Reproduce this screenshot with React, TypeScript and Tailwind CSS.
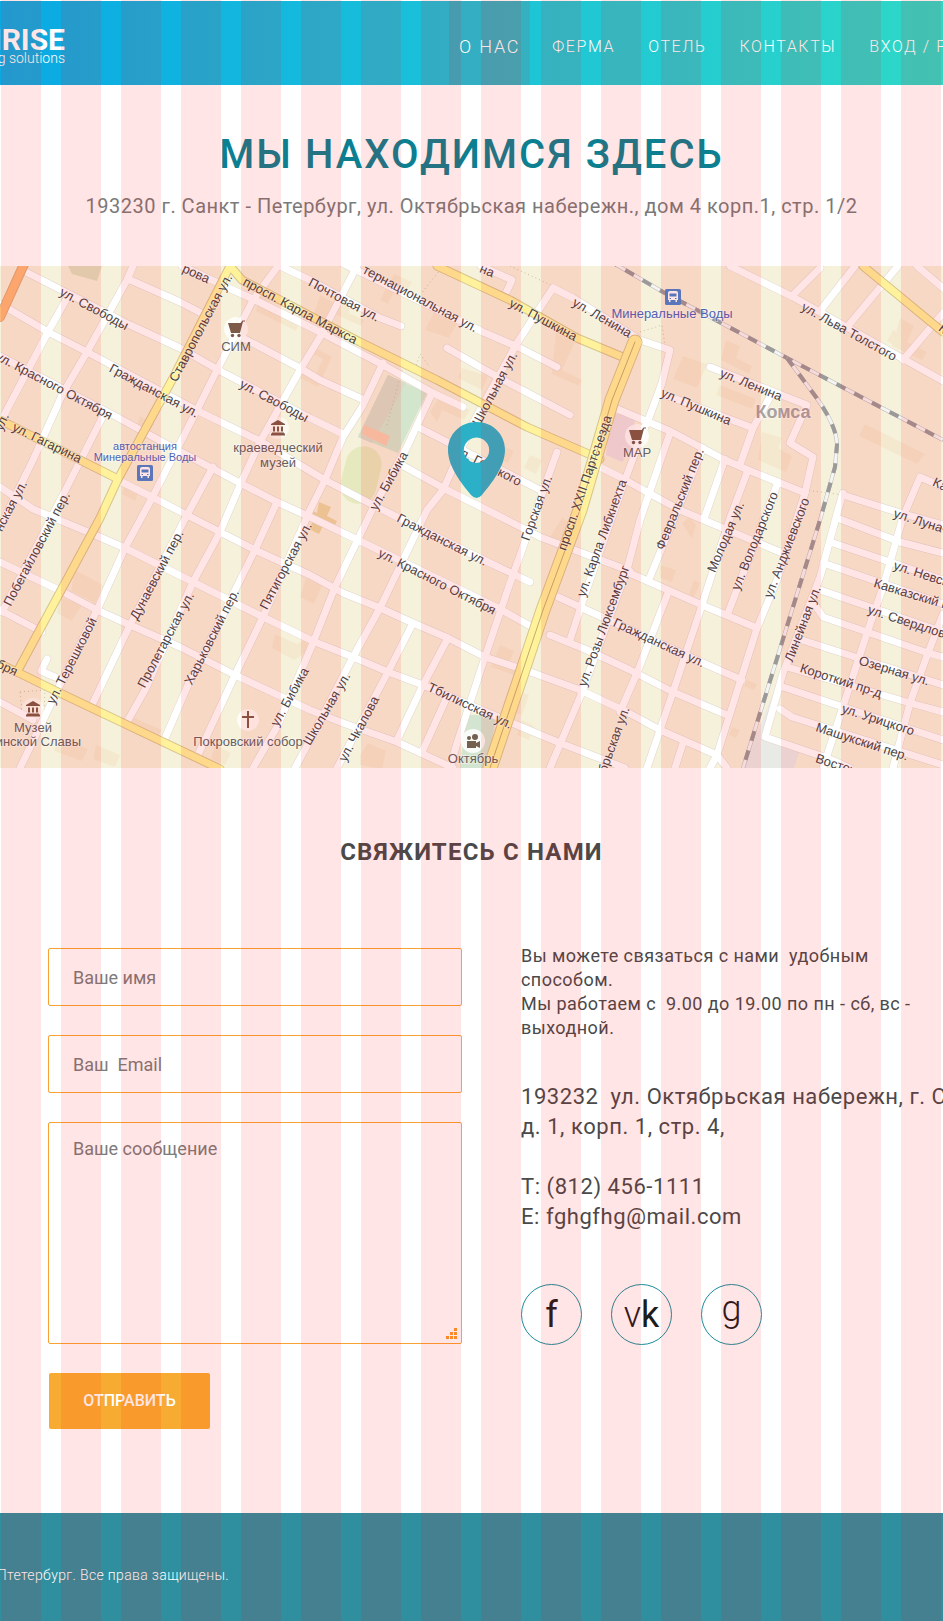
import React from "react";

const minorRoads: string[] = [
  "M24 271L130 325L180 348L222 372L310 418L343 434",
  "M0 304L50 333L87 352L200 412L260 441L325 480L373 505L397 517L490 563L530 582",
  "M0 356L115 416L168 445L240 483L277 502L310 517L360 541L500 609L532 627",
  "M122 482L152 497L187 515L220 532L255 550L310 575L343 593L380 608L413 623L448 638L485 657L525 670L580 690L627 712L660 730L717 755L727 768",
  "M0 487L33 509L95 535L125 548L193 582L263 617L315 642L353 657L388 672L423 685L512 723L560 743L625 768",
  "M0 562L63 592L97 610L130 625L180 647L235 675L310 710L343 723L397 742L453 768",
  "M0 610L42 632",
  "M0 702L33 720",
  "M55 677L41 671L47 659",
  "M340 262L483 332L518 347L557 367",
  "M280 266L310 280L380 318L401 326",
  "M182 266L233 290L255 300L320 332L383 365L433 393L463 407",
  "M128 279L180 302L207 316",
  "M243 338L300 368L320 380L362 399",
  "M447 348L480 367L507 382L570 415",
  "M481 266L512 280L506 293",
  "M553 288L573 298L640 340L670 350L662 383L647 423",
  "M133 266L127 280L87 352L63 393L33 460L0 527",
  "M67 298L48 332L3 417L0 426",
  "M102 418L67 487L40 540L2 612",
  "M278 266L253 300L217 370L197 410L152 498L125 548L97 610L60 685L20 768",
  "M357 266L320 337L300 370L260 442L240 485L220 532L193 582L145 690L127 722",
  "M213 467L187 515L160 567L130 625L92 705",
  "M277 502L255 550L188 685L163 743",
  "M383 363L362 407L343 437L325 480L310 510L263 617L235 675L197 757",
  "M432 393L407 447L372 510L335 587L313 643L277 727L253 768",
  "M553 288L517 343L473 423L443 490L427 510L380 608L353 657L310 740L295 768",
  "M420 428L540 490",
  "M398 463L447 490L493 513L540 537L630 571",
  "M413 623L388 672L337 768",
  "M448 638L423 685L397 740",
  "M447 697L423 750",
  "M557 452L523 547L510 583L485 657L457 743L450 768",
  "M646 424L625 480L583 600L570 640",
  "M670 433L640 520L627 570L580 697L550 768",
  "M703 448L650 577",
  "M725 459L704 519",
  "M748 470L730 518L702 605L673 692L647 768",
  "M778 482L728 613",
  "M710 367L807 405L790 443L813 457L805 493L777 580L757 628L717 755L710 768",
  "M668 593L637 673L620 712",
  "M683 743L675 768",
  "M610 406L670 431L723 459L748 470L805 493",
  "M600 467L620 477L647 492L680 510L780 552",
  "M627 572L702 605L757 628",
  "M558 597L580 607L703 663L742 680",
  "M550 635L587 650L630 670L673 692L727 715",
  "M660 393L753 428",
  "M772 393L753 428L741 462",
  "M730 266L793 297L900 357L943 381",
  "M820 268L793 295",
  "M855 266L820 311",
  "M898 266L848 326",
  "M943 313L903 360",
  "M917 266L943 288",
  "M843 493L838 510L820 577L783 673L765 737L827 758L850 768",
  "M943 487L920 477L903 517L883 587L867 633L823 768",
  "M843 495L897 512L943 525",
  "M837 518L900 542L943 553",
  "M833 543L890 562L943 580",
  "M823 563L943 604",
  "M820 590L943 632",
  "M813 602L823 617L867 632L928 653L943 657",
  "M802 640L855 657L943 685",
  "M787 667L910 703L943 712",
  "M783 687L837 705L943 740",
  "M780 709L792 717L943 765",
  "M943 614L928 653L910 703L893 768",
];

const yellowRoads: string[] = [
  "M0 420L118 479",
  "M230 266L172 380L118 479L100 518L17 672",
  "M0 664L17 672L60 693L220 769",
  "M230 266L242 280L360 342L437 380L527 427L600 459",
  "M437 266L510 300L577 338L625 358",
  "M863 266L943 332",
];

const buildings: string[] = [
  "M310 345l22 12l-14 30l-20 -10l3 -6l13 6l9 -18l-14 -7z",
  "M340 300l12 5l-4 8l16 7l-3 6l-24 -11z",
  "M380 300l14 -26l18 8l-5 8l-10 -4l-9 18z",
  "M425 330l10 -20l24 10l-10 18z",
  "M462 368l26 8l-6 14l-24 -12z",
  "M430 412l10 -16l30 14l-6 10l-22 -10l-5 12z",
  "M556 330l20 10l-14 30l20 10l-3 6l-27 -12z",
  "M500 445l14 6l-6 12l-14 -6z",
  "M530 455l12 5l-6 14l-12 -6z",
  "M262 285l12 6l-5 12l32 16l-5 12l-40 -20z",
  "M320 295l14 8l-8 18l-12 -8z",
  "M683 356l24 8l-10 24l-24 -9z",
  "M726 340l14 6l-4 12l16 8l-3 8l-28 -14z",
  "M720 385l36 14l-4 10l-36 -14z",
  "M762 432l20 6l-4 10l14 8l-6 16l-28 -12z",
  "M865 424l60 30l-8 10l-58 -28z",
  "M900 318l14 8l-7 16l20 10l-5 8l-30 -14z",
  "M893 330l10 4l-6 12l-10 -5z",
  "M75 570l28 15l-8 18l-24 -12z",
  "M60 597l22 8l-10 16l-15 -8z",
  "M275 634l22 10l12 -6l-3 14l-12 8l-22 -12z",
  "M306 578l16 8l-8 18l-14 -7z",
  "M60 737l28 12l-6 12l-28 -10z",
  "M96 745l24 10l-5 12l-22 -8z",
  "M128 715l34 15l-5 7l-34 -15z",
  "M215 745l16 8l-6 12l-14 -6z",
  "M140 416l14 8l-6 10l-12 -6z",
  "M124 486l14 7l-3 8l-13 -7z",
  "M500 645l14 6l-5 12l20 8l-4 8l-34 -12z",
  "M548 540l14 -22l8 4l-12 28z",
  "M515 690l14 5l-7 20l-12 -4z",
  "M522 720l12 6l-5 14l-12 -5z",
  "M660 565l16 5l-4 12l-12 -4z",
  "M682 523l8 -6l6 8l-4 14z",
  "M747 680l10 4l-3 6l-10 -4z",
  "M732 727l8 3l-4 8l-7 -3z",
  "M694 580l6 3l-6 14l-5 -3z",
  "M360 755l8 -12l18 8l-4 18l-22 -4z",
];

type Label = [text: string, x: number, y: number, angle: number];

const streetLabels: Label[] = [
  ["рова", 196, 274, 24],
  ["ул. Свободы", 94, 309, 28],
  ["Ставропольская ул.", 201, 328, -62],
  ["просп. Карла Маркса", 300, 311, 28],
  ["ул. Свободы", 274, 401, 28],
  ["Гражданская ул.", 154, 391, 28],
  ["ул. Красного Октября", 54, 386, 28],
  ["ул. Гагарина", 47, 443, 26],
  ["ул.", 2, 422, -65],
  ["Почтовая ул.", 344, 300, 28],
  ["тернациональная ул.", 420, 299, 28],
  ["на", 487, 271, 22],
  ["ул. Пушкина", 543, 320, 28],
  ["ул. Ленина", 602, 318, 30],
  ["Школьная ул.", 495, 389, -62],
  ["ул. Горького", 488, 466, 27],
  ["ул. Бибика", 389, 481, -61],
  ["просп. XXII Партсъезда", 585, 483, -71],
  ["Горская ул.", 537, 508, -70],
  ["ул. Карла Либкнехта", 602, 538, -70],
  ["ул. Розы Люксембург", 604, 626, -70],
  ["Гражданская ул.", 442, 540, 27],
  ["ул. Красного Октября", 437, 582, 27],
  ["Гражданская ул.", 659, 643, 25],
  ["Тбилисская ул.", 470, 706, 25],
  ["Школьная ул.", 327, 709, -60],
  ["ул. Чкалова", 359, 729, -62],
  ["ул. Бибика", 290, 697, -61],
  ["Пятигорская ул.", 286, 566, -62],
  ["Харьковский пер.", 212, 637, -63],
  ["Пролетарская ул.", 166, 640, -62],
  ["Дунаевский пер.", 157, 575, -62],
  ["Побегайловский пер.", 37, 549, -62],
  ["нская ул.", 11, 506, -62],
  ["ул. Терешковой", 72, 661, -63],
  ["бря", 7, 668, 25],
  ["ул. Льва Толстого", 849, 332, 29],
  ["ул. Ленина", 751, 385, 22],
  ["ул. Пушкина", 696, 407, 23],
  ["Февральский пер.", 680, 499, -68],
  ["Молодая ул.", 726, 537, -67],
  ["ул. Володарского", 755, 541, -68],
  ["ул. Анджиевского", 787, 548, -69],
  ["Линейная ул.", 803, 624, -69],
  ["ябрьская ул.", 613, 743, -70],
  ["ул. Луначарского", 943, 529, 18],
  ["Красная", 960, 342, 38],
  ["Калинина", 960, 494, 25],
  ["ул. Невского", 930, 577, 18],
  ["Кавказский пер.", 920, 597, 17],
  ["ул. Свердлова", 910, 623, 18],
  ["Озерная ул.", 894, 671, 17],
  ["Короткий пр-д", 841, 681, 18],
  ["ул. Урицкого", 878, 720, 18],
  ["Машукский пер.", 862, 742, 18],
  ["Восточная", 846, 768, 18],
];

function Museum({ x, y }: { x: number; y: number }) {
  return (
    <g transform={`translate(${x} ${y})`}>
      <circle r="11" fill="#fff" opacity=".6" />
      <path
        d="M0-8L7-4V-3H-7V-4ZM-5-1.500h2v5h-2zM-1-1.500h2v5h-2zM3-1.500h2v5h-2zM-6 4.500h12v1h1v2H-7v-2h1z"
        fill="#7d5a48"
      />
    </g>
  );
}

function Cart({ x, y }: { x: number; y: number }) {
  return (
    <g transform={`translate(${x} ${y})`}>
      <circle r="12" fill="#fff" opacity=".75" />
      <path d="M-8-6H4.500L6.500-8.500H9V-7.500H7L4 4H-5Z" fill="#7d5a48" />
      <circle cx="-3.500" cy="6.500" r="1.700" fill="#7d5a48" />
      <circle cx="3" cy="6.500" r="1.700" fill="#7d5a48" />
    </g>
  );
}

function TransitStop({ x, y }: { x: number; y: number }) {
  return (
    <g transform={`translate(${x} ${y})`}>
      <rect x="-8" y="-8" width="16" height="16" rx="1.500" fill="#4a83cf" />
      <path
        d="M-3-6H3Q5-6 5-4V3H4V5H2.500V3H-2.500V5H-4V3H-5V-4Q-5-6-3-6Z"
        fill="#fff"
      />
      <path d="M-3.500-3.500h7v3h-7zM-3.500 1h1.500v1h-1.500zM2 1h1.500v1H2z" fill="#4a83cf" />
    </g>
  );
}

function CityMap() {
  const highway = "M635 342L612 400L580 510L543 610L523 670L490 768";
  const railMain = "M608 260L663 292L787 358L943 440";
  const railBranch = "M787 358L813 393Q837 425 837 445L835 467L820 520L743 768";
  return (
    <svg
      className="block h-[502px] w-full"
      viewBox="0 266 943 502"
      preserveAspectRatio="xMidYMid slice"
      role="img"
      aria-label="Карта"
    >
      <rect x="-500" y="0" width="2000" height="1100" fill="#f6f1da" />
      <path d="M68 266L102 266L97 281L72 274Z" fill="#dfe0bf" />
      <path d="M777 684L765 737L800 750L794 768L743 768Z" fill="#e9e9e6" />
      <path d="M610 415L633 412L637 440L622 462L606 455Z" fill="#ecdfe2" />
      <path d="M466 715L497 715L486 768L460 768Z" fill="#d3e5d0" />
      <path d="M388 375L427 393L398 453L358 437Z" fill="#d3e6cd" />
      <path d="M388 375L406 383L372 443L358 437Z" fill="#dadcca" />
      <path d="M364 425L390 436L386 446L362 434Z" fill="#f6cdb0" />
      <rect x="343" y="446" width="36" height="58" rx="18" fill="#e6e9bd" transform="rotate(14 361 475)" />
      <path d="M319 502l12 5l-4 9l10 5l-4 9l-10 -4l-4 8l-10 -5l4 -8l-4 -5l4 -5l4 2z" fill="#ebd8a4" />
      <g fill="#f4e9cf">
        {buildings.map((d) => (
          <path key={d} d={d} />
        ))}
      </g>
      <g fill="none" stroke="#c8c09c" strokeWidth="1" strokeDasharray="1 3">
        <path d="M443 266L421 294M403 366L387 425M415 369L420 354L430 367M510 266L553 286M640 332L662 325L665 345M805 490L843 495M20 692L45 690L44 712L22 712Z" />
      </g>
      <g fill="none" strokeLinejoin="round" strokeLinecap="round">
        <g stroke="#e0d6d0" strokeWidth="8">
          {minorRoads.map((d) => (
            <path key={d} d={d} />
          ))}
        </g>
        <g stroke="#ffffff" strokeWidth="7">
          {minorRoads.map((d) => (
            <path key={d} d={d} />
          ))}
        </g>
        <g stroke="#d6c48c" strokeWidth="9">
          {yellowRoads.map((d) => (
            <path key={d} d={d} />
          ))}
        </g>
        <g stroke="#fff29b" strokeWidth="7">
          {yellowRoads.map((d) => (
            <path key={d} d={d} />
          ))}
        </g>
        <path d="M25 262L0 317" stroke="#d9a878" strokeWidth="10" />
        <path d="M25 262L0 317" stroke="#fcb878" strokeWidth="8" />
        <path d={highway} stroke="#d6c48c" strokeWidth="15" />
        <path d={highway} stroke="#fff29b" strokeWidth="13" />
        <path d={highway} stroke="#c2ae6c" strokeWidth="1" />
      </g>
      <g fill="none">
        {[railMain, railBranch].map((d) => (
          <g key={d}>
            <path d={d} stroke="#b9b7b5" strokeWidth="4" />
            <path d={d} stroke="#f4f4f4" strokeWidth="3" />
            <path d={d} stroke="#9b999a" strokeWidth="4" strokeDasharray="10 10" />
          </g>
        ))}
      </g>

      <g
        fontFamily="'Liberation Sans', Arial, sans-serif"
        fontSize="13"
        fill="#4a4446"
        stroke="#ffffff"
        strokeOpacity=".4"
        strokeWidth="2"
        paintOrder="stroke"
        textAnchor="middle"
      >
        {streetLabels.map(([text, x, y, angle]) => (
          <text key={`${text}-${x}-${y}`} transform={`translate(${x} ${y}) rotate(${angle})`} y="4">
            {text}
          </text>
        ))}
        <g fill="#655f5f">
          <text x="236" y="351">СИМ</text>
          <text x="278" y="452">краеведческий</text>
          <text x="278" y="467">музей</text>
          <text x="637" y="457">МАР</text>
          <text x="33" y="732">Музей</text>
          <text x="81" y="746" textAnchor="end">ермонтинской Славы</text>
          <text x="248" y="746">Покровский собор</text>
          <text x="473" y="763">Октябрь</text>
        </g>
        <g fill="#4f63b8">
          <text x="145" y="450" fontSize="11">автостанция</text>
          <text x="145" y="461" fontSize="11">Минеральные Воды</text>
          <text x="672" y="318">Минеральные Воды</text>
        </g>
        <text x="783" y="418" fontSize="18" fontWeight="700" fill="#a9a1a1">Комса</text>
      </g>

      <Cart x={236} y={329} />
      <Cart x={637} y={436} />
      <Museum x={278} y={428} />
      <Museum x={33} y={709} />
      <TransitStop x={145} y={473} />
      <TransitStop x={673} y={297} />
      <circle cx="248" cy="720" r="11" fill="#fff" opacity=".75" />
      <path d="M247 711h2v5h5v2h-5v10h-2v-10h-5v-2h5z" fill="#7d5a48" />
      <circle cx="473" cy="741" r="12" fill="#fff" opacity=".85" />
      <path d="M467 741h9v2l4-2v7l-4-2v2h-9z" fill="#75604f" />
      <circle cx="469" cy="738" r="2" fill="#75604f" />
      <circle cx="475" cy="737" r="3" fill="#75604f" />

      <path
        fillRule="evenodd"
        fill="#2bb0c8"
        d="M476.500 422C460 422 448 434.500 448 450C448 467 462 484 471 495Q476.500 501 482 495C491 484 505 467 505 450C505 434.500 493 422 476.500 422ZM476.500 437.500A12.700 12.700 0 1 1 476.490 437.500Z"
      />
    </svg>
  );
}

const navItems = ["О НАС", "ФЕРМА", "ОТЕЛЬ", "КОНТАКТЫ", "ВХОД / РЕГИСТРАЦИЯ"];

function Header() {
  return (
    <header className="flex h-[84px] justify-between overflow-hidden bg-linear-to-r from-[#0aa9e4] via-[#1cc2d8] to-[#2ed8c6] text-white">
      <a href="#" className="flex w-[65px] flex-col items-end justify-center overflow-hidden pt-1.5 whitespace-nowrap">
        <span className="text-[30px] leading-6 font-bold">NRISE</span>
        <span className="text-sm leading-3 font-light">g solutions</span>
      </a>
      <nav className="flex w-[494px] shrink-0 gap-[11px] overflow-hidden font-light whitespace-nowrap">
        {navItems.map((item, i) => (
          <a
            key={item}
            href="#"
            className={
              i === 0
                ? "flex shrink-0 items-center bg-[#ff0000]/10 px-[10px] pt-2 text-lg tracking-widest"
                : "flex shrink-0 items-center px-[11px] pt-2 text-base tracking-widest"
            }
          >
            {item}
          </a>
        ))}
      </nav>
    </header>
  );
}

const fieldClass =
  "block w-full rounded-[2px] border border-[#f7a233] bg-transparent px-6 text-lg text-[#4a4a4a] placeholder:text-[#7c7c7c] placeholder:opacity-100 focus:outline-none";

function ContactForm() {
  return (
    <form className="flex flex-col items-start gap-[29px]" onSubmit={(e) => e.preventDefault()}>
      <label className="w-full">
        <span className="sr-only">Ваше имя</span>
        <input type="text" placeholder="Ваше имя" className={`${fieldClass} h-[58px]`} />
      </label>
      <label className="w-full">
        <span className="sr-only">Ваш Email</span>
        <input type="email" placeholder={"Ваш\u00a0 Email"} className={`${fieldClass} h-[58px]`} />
      </label>
      <label className="relative w-full">
        <span className="sr-only">Ваше сообщение</span>
        <textarea placeholder="Ваше сообщение" className={`${fieldClass} h-[222px] resize-none py-3`} />
        <svg className="absolute right-[5px] bottom-[5px] h-[11px] w-[11px]" viewBox="0 0 11 11" fill="#f99a2e" aria-hidden="true">
          <path d="M8 0h3v3H8zM4 4h3v3H4zM8 4h3v3H8zM0 8h3v3H0zM4 8h3v3H4zM8 8h3v3H8z" />
        </svg>
      </label>
      <button type="submit" className="ml-px h-14 w-[161px] rounded-[2px] bg-[#f8ab32] text-base font-medium text-white">
        ОТПРАВИТЬ
      </button>
    </form>
  );
}

const socialClass =
  "flex h-[61px] w-[61px] items-center justify-center rounded-full border border-[#1b8c9b] text-4xl text-[#1c1c1c]";

function ContactInfo() {
  return (
    <div className="-mt-1 overflow-hidden text-[#4a4a4a]">
      <div className="max-w-[400px] text-lg leading-6 tracking-wide">
        <p>Вы можете связаться с нами{"\u00a0 "}удобным способом.</p>
        <p>Мы работаем с{"\u00a0 "}9.00 до 19.00 по пн - сб, вс - выходной.</p>
      </div>
      <address className="mt-[42px] text-[22px] leading-[30px] tracking-wide whitespace-nowrap not-italic">
        <p>193232{"\u00a0 "}ул. Октябрьская набережн, г. СПб</p>
        <p>д. 1, корп. 1, стр. 4,</p>
        <p className="mt-[30px]">
          Т: <a href="tel:+78124561111">(812) 456-1111</a>
        </p>
        <p>
          Е: <a href="mailto:fghgfhg@mail.com">fghgfhg@mail.com</a>
        </p>
      </address>
      <div className="mt-[52px] flex gap-[29px]">
        <a href="#" aria-label="Facebook" className={socialClass}>
          f
        </a>
        <a href="#" aria-label="ВКонтакте" className={socialClass}>
          <span className="font-light">v</span>k
        </a>
        <a href="#" aria-label="Google" className={`${socialClass} pb-3 font-light`}>
          g
        </a>
      </div>
    </div>
  );
}

export default function App() {
  return (
    <div className="relative overflow-hidden bg-white pt-px font-[Roboto,sans-serif]">
      <Header />
      <main>
        <section className="pt-[46px] text-center">
          <h1 className="text-[40px] leading-[48px] font-medium tracking-wider text-[#0c8091]">МЫ НАХОДИМСЯ ЗДЕСЬ</h1>
          <p className="mt-[13px] mb-[46px] text-xl leading-7 tracking-wide text-[#7a7a7a]">
            193230 г. Санкт - Петербург, ул. Октябрьская набережн., дом 4 корп.1, стр. 1/2
          </p>
          <CityMap />
        </section>
        <section className="pt-[68px] pb-[84px]">
          <h2 className="text-center text-2xl leading-8 font-bold tracking-wider text-[#4a4a4a]">СВЯЖИТЕСЬ С НАМИ</h2>
          <div className="mt-20 grid grid-cols-[minmax(0,414fr)_minmax(0,422fr)] gap-[59px] pl-12">
            <ContactForm />
            <ContactInfo />
          </div>
        </section>
      </main>
      <footer className="flex h-[108px] items-center bg-[#2f8f9f] pt-4 text-white">
        <p className="flex w-[229px] justify-end overflow-hidden text-sm font-light tracking-wide whitespace-nowrap">
          Птетербург. Все права защищены.
        </p>
      </footer>
      <div
        aria-hidden="true"
        className="pointer-events-none absolute inset-0 bg-[repeating-linear-gradient(to_right,rgba(255,0,0,0.1)_0px,rgba(255,0,0,0.1)_40px,transparent_40px,transparent_60px)] bg-[position:1px_0px]"
      />
    </div>
  );
}
